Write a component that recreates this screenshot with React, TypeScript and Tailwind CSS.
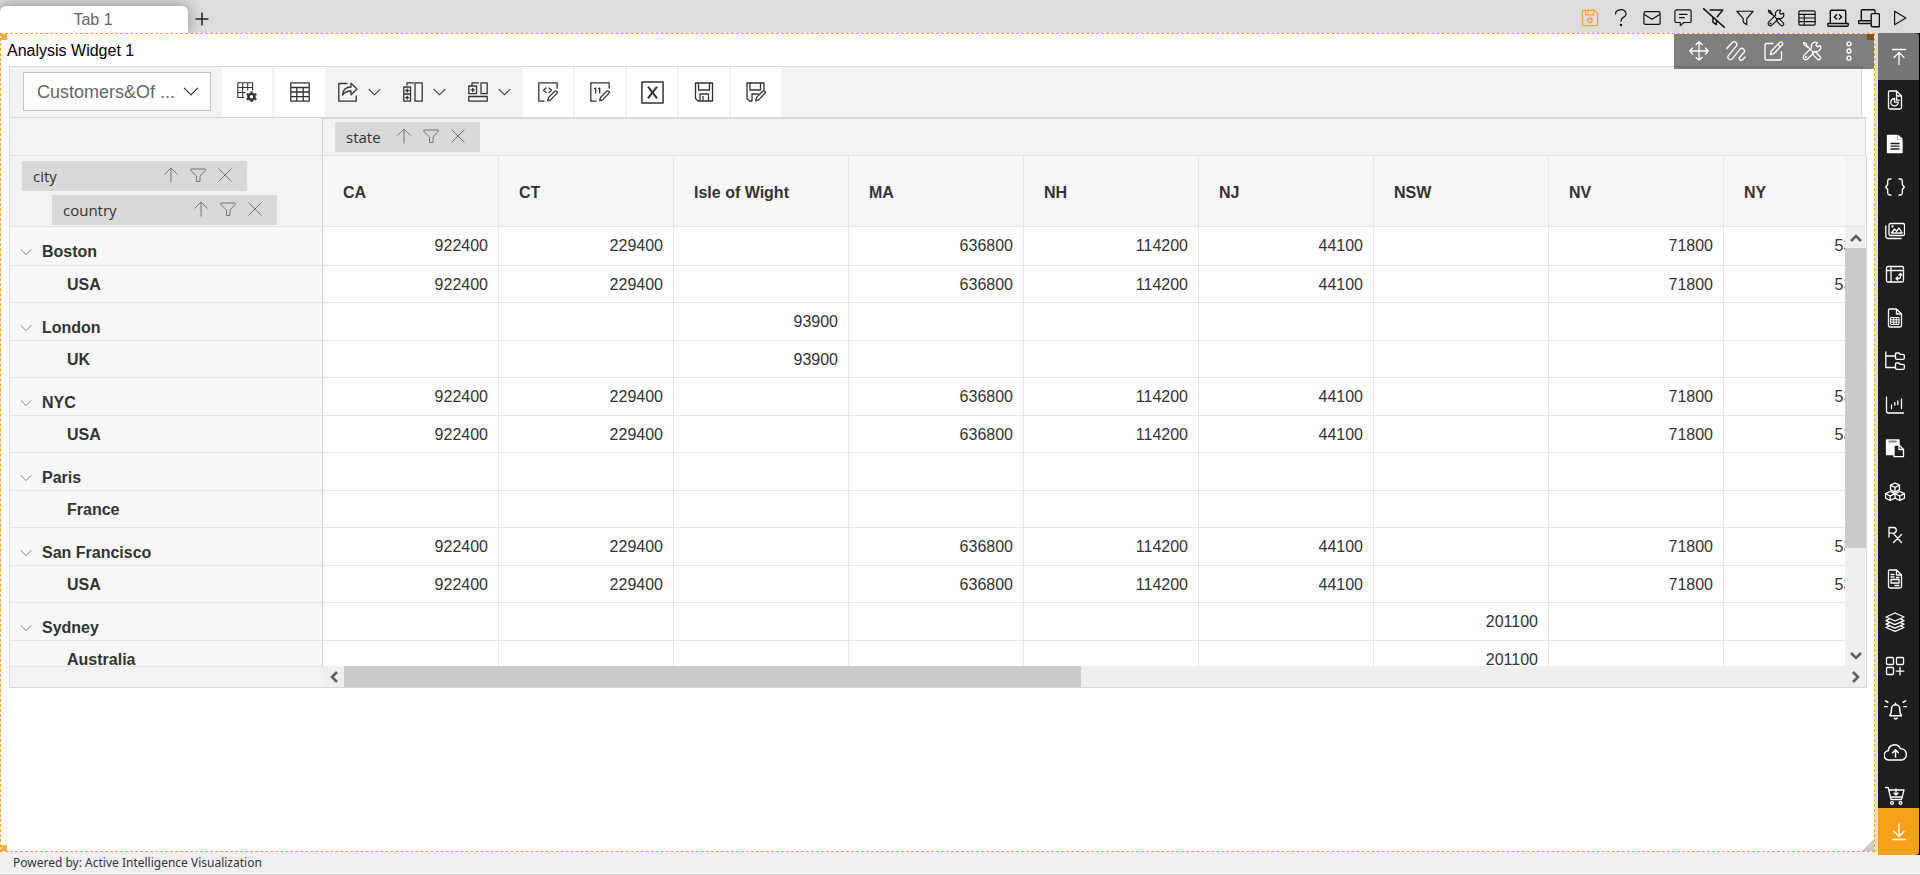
import type { ReactNode } from 'react'

interface IconProps {
  children: ReactNode
  className?: string
}

function Icon({ children, className = 'size-5' }: IconProps) {
  return (
    <svg
      viewBox="0 0 20 20"
      fill="none"
      stroke="currentColor"
      strokeWidth="1.3"
      strokeLinecap="round"
      strokeLinejoin="round"
      className={`${className} shrink-0`}
      aria-hidden="true"
    >
      {children}
    </svg>
  )
}

const toolsIcon = (
  <>
    <path d="M1.5 1.5l2.2.6L6 6l5.5 5.5M1.5 1.5l.6 2.2L5.6 6.2" />
    <path d="M11.5 11l1.5-.5 5 5a1.8 1.8 0 0 1-2.6 2.6l-5-5 .6-1.6" />
    <path d="M18.3 4.6l-2.8 1.2-1.5-1.5 1.2-2.8a4.2 4.2 0 0 0-5.6 5.3L2 14.4A2.5 2.5 0 1 0 5.6 18l7.6-7.6a4.2 4.2 0 0 0 5.1-5.8z" />
    <circle cx="3.9" cy="16.1" r=".5" />
  </>
)

const headerIcons = [
  {
    label: 'Save',
    className: 'text-[#f9a11b]',
    icon: (
      <>
        <path d="M1.5 3a1.5 1.5 0 0 1 1.5-1.5h12L18.5 5v12a1.5 1.5 0 0 1-1.5 1.5H3A1.5 1.5 0 0 1 1.5 17z" />
        <path d="M5 1.5v5h9v-5M8 1.5v2.5" />
        <circle cx="10" cy="12.5" r="2.4" />
      </>
    ),
  },
  {
    label: 'Help',
    icon: (
      <>
        <path d="M4 5.500a5.800 4.500 0 1 1 8.500 3.800C10.600 10.400 10 11.200 10 13.500" />
        <circle cx="10" cy="17.800" r=".7" fill="currentColor" />
      </>
    ),
  },
  {
    label: 'Mail',
    icon: (
      <>
        <rect x="1" y="3" width="18" height="14" rx="1.5" />
        <path d="M1.500 6l8.500 5.500L18.500 6" />
      </>
    ),
  },
  {
    label: 'Comments',
    icon: <path d="M2.500 1h15A1.500 1.500 0 0 1 19 2.500v11a1.500 1.500 0 0 1-1.500 1.500H11l-4 3.500V15H2.500A1.500 1.500 0 0 1 1 13.500v-11A1.500 1.500 0 0 1 2.500 1zM6 6h8.500M6 9.500h5.500" />,
  },
  {
    label: 'Clear filter',
    wide: true,
    icon: <path d="M.5 1.500L19.500 18.500M6.500 2.800h11.500l-5 6M9 9.500v4.200l3.200 2.300v-3.500" />,
  },
  {
    label: 'Filter',
    icon: <path d="M1 2.500h18l-7 8.200V17.500l-4-2.700v-4.100z" />,
  },
  { label: 'Tools', icon: toolsIcon },
  {
    label: 'Data table',
    icon: (
      <>
        <rect x="1" y="2" width="18" height="16" rx="1.200" />
        <path d="M1 6h18M1 10h18M1 14h18M7 6v12" />
      </>
    ),
  },
  {
    label: 'Script',
    wide: true,
    icon: <path d="M3 14.500V4a1 1 0 0 1 1-1h12a1 1 0 0 1 1 1v10.500M.7 15h18.600v1.500a1 1 0 0 1-1 1H1.700a1 1 0 0 1-1-1zM8.700 7L6.700 9l2 2M11.300 7l2 2-2 2" />,
  },
  {
    label: 'Devices',
    wide: true,
    icon: (
      <>
        <path d="M3 12V3.500a1 1 0 0 1 1-1h10.500a1 1 0 0 1 1 1V5M.5 12.500h10.500M.5 12.500v1.500a1 1 0 0 0 1 1H11" />
        <rect x="12" y="6" width="7.500" height="12" rx="1" />
      </>
    ),
  },
  { label: 'Run', icon: <path d="M4 2.500v15L16.500 10z" /> },
]

const widgetIcons = [
  {
    label: 'Move',
    icon: <path d="M10 .8v18.400M.8 10h18.400M7 3.500l3-2.700 3 2.700M7 16.500l3 2.700 3-2.700M3.500 7L.8 10l2.700 3M16.500 7l2.700 3-2.700 3" />,
  },
  {
    label: 'Link',
    icon: <path d="M.8 7.500L6 1.800a2.700 2.700 0 0 1 4.200 3.400L2.600 14.400a2.400 2.400 0 0 0 3.600 3.400L14 8.200a2.600 2.600 0 0 1 4 3.300L13.800 16a1.900 1.900 0 0 0 2.700 2.700l2.700-2.700" />,
  },
  {
    label: 'Edit',
    icon: <path d="M9 2.500H2.500A1.500 1.500 0 0 0 1 4v13.500A1.500 1.500 0 0 0 2.500 19H16a1.500 1.500 0 0 0 1.500-1.500V11M6.500 13.700l.8-3.700L15.700 1.500a1.700 1.700 0 0 1 2.500 0 1.700 1.700 0 0 1 0 2.500L10 12.500zM14 3.500L16.500 6" />,
  },
  { label: 'Settings', icon: toolsIcon },
  {
    label: 'More',
    icon: (
      <>
        <circle cx="10" cy="2.800" r="2" />
        <circle cx="10" cy="10" r="2" />
        <circle cx="10" cy="17.200" r="2" />
      </>
    ),
  },
]

const pageOutline = 'M4.500 1h7L16.500 6v11.500a1.500 1.500 0 0 1-1.500 1.500H5a1.500 1.500 0 0 1-1.500-1.500V2a1 1 0 0 1 1-1zM11.500 1v5h5'

const sidebarIcons = [
  {
    label: 'Report',
    icon: (
      <>
        <path d={pageOutline} />
        <path d="M9.500 8.500a3.700 3.700 0 1 0 3.700 3.700H9.500zM11.500 7.500v2.700h2.700" />
      </>
    ),
  },
  {
    label: 'Document',
    icon: (
      <>
        <path d="M2.500 1.500h9v5h5.500v12H2.500z" fill="currentColor" />
        <path d="M13 1.500L17 5h-4z" fill="currentColor" />
        <path d="M6 9.500h8M6 12.200h8M6 15h8" stroke="#1e1e1e" />
      </>
    ),
  },
  {
    label: 'Variables',
    icon: <path d="M6 2H4.500A2 2 0 0 0 2.700 4v3.500L.7 10l2 2.500V16a2 2 0 0 0 1.800 2H6M14 2h1.500a2 2 0 0 1 1.800 2v3.500l2 2.500-2 2.500V16a2 2 0 0 1-1.800 2H14" />,
  },
  {
    label: 'Images',
    icon: (
      <>
        <rect x="4" y="2.500" width="15.500" height="12" rx="1.500" />
        <path d="M.8 5v10.500A2 2 0 0 0 2.800 17.500H16M6.500 12l3-4 2.200 2.200L14 7l3.200 5z" />
        <circle cx="7.500" cy="5.500" r=".5" />
      </>
    ),
  },
  {
    label: 'Pivot',
    icon: (
      <>
        <rect x="1.500" y="2.500" width="17" height="15.500" rx="1.500" />
        <path d="M1.500 6.500h17M6 2.500V18M11 14.500h2.500a2 2 0 0 0 2-2V10M12.500 13L11 14.500l1.500 1.500M14 11l1.500-1.500L17 11" />
      </>
    ),
  },
  {
    label: 'Data sheet',
    icon: (
      <>
        <path d={pageOutline} />
        <path d="M6 9.500h8v7H6zM6 11.800h8M6 14.200h8M8.700 9.500v7M11.300 9.500v7" strokeWidth="1" />
      </>
    ),
  },
  {
    label: 'Folders',
    icon: <path d="M.8 1v15.500h9M.8 5h9M11 2h3l1 1.300h3a1.300 1.300 0 0 1 1.300 1.300V7A1.300 1.300 0 0 1 18 8.300h-6A1.300 1.300 0 0 1 10.500 7V2.500zM11 12h3l1 1.300h3a1.300 1.300 0 0 1 1.300 1.300V17a1.300 1.300 0 0 1-1.300 1.300h-6A1.300 1.300 0 0 1 10.500 17v-4.500z" />,
  },
  {
    label: 'Charts',
    icon: <path d="M1.500 2v14a2 2 0 0 0 2 2h15M6.500 10v3.500M9.800 7.500v2.700M12.800 6v3.500M16.500 4v9.500" />,
  },
  {
    label: 'Templates',
    icon: (
      <>
        <path d="M1.500 2H14v4.500H9.500v10h-8z" fill="currentColor" />
        <path d="M4.500 3.500H11" stroke="#888" strokeWidth="2" />
        <path d="M9 7h5l4.500 4.500v7.200H9z" fill="#1e1e1e" />
        <path d="M14 7v4.500h4.500" />
      </>
    ),
  },
  {
    label: 'Cubes',
    icon: <path d="M10 1l4.500 2.200v4.600L10 10 5.500 7.800V3.200zM5.500 3.200L10 5.500l4.500-2.300M10 5.500V10M5.200 9.500L10 11.700v4.500L5.200 18.500.5 16.200v-4.500zM.5 11.700L5.200 14 10 11.700M5.200 14v4.500M14.800 9.500l4.700 2.200v4.500l-4.700 2.300L10 16.200v-4.500zM10 11.700l4.800 2.300 4.700-2.300M14.800 14v4.500" />,
  },
  {
    label: 'Formulas',
    icon: <path d="M4 12V2.500h4.500a2.800 2.800 0 0 1 0 5.600H4M8 8.100l8.500 9.400M16.500 9.500l-8 8" />,
  },
  {
    label: 'Forms',
    icon: (
      <>
        <path d={pageOutline} />
        <path d="M6 5.500h3M6 8h3M6 10.500h8v3.500H6zM11.500 8.500h2.500M10 16.500h4" />
      </>
    ),
  },
  {
    label: 'Layers',
    icon: <path d="M10 1l9 4-9 4-9-4zM4 7.200L1 8.700l9 4 9-4-3-1.500M4 10.800l-3 1.400 9 4 9-4-3-1.400M4 14.200L1 15.500l9 3.800 9-3.800-3-1.300" />,
  },
  {
    label: 'Add widget',
    icon: (
      <>
        <rect x="1.500" y="1.500" width="7" height="7" rx="1" />
        <rect x="11.500" y="1.500" width="7" height="7" rx="1" />
        <rect x="1.500" y="11.500" width="7" height="7" rx="1" />
        <path d="M15 11.500v7.500M11.300 15.200h7.500" />
      </>
    ),
  },
  {
    label: 'Alerts',
    wide: true,
    icon: <path d="M5 15.500c1.300-1.500 1.500-3 1.500-6a3.600 3.600 0 0 1 7.200 0c0 3 .2 4.500 1.500 6zM9 17.500a1.300 1.300 0 0 0 2.300 0M10 4.500v1M.3 7.500h2.500M1.300 2.500l2 1.200M17.200 7.500h2.500M18.700 2.500l-2 1.200" />,
  },
  {
    label: 'Upload',
    wide: true,
    icon: <path d="M4.500 16.500a4 4 0 0 1-.8-8 5.500 5.500 0 0 1 10.600-1.700 4.900 4.900 0 0 1 1.200 9.700zM10 14V8M7.500 10.200L10 7.700l2.500 2.500" />,
  },
  {
    label: 'Cart',
    icon: (
      <>
        <path d="M.5 1.500h2.700L6 13.500h10.500L19 4H4M5.500 11h12M11 3v5.500M9 7l2 2 2-2" />
        <circle cx="7" cy="17" r="1.400" />
        <circle cx="15.500" cy="17" r="1.400" />
      </>
    ),
  },
]

const pencilIcon = <path d="M9.800 18.800l.6-3.200 6.200-6.300a1.500 1.500 0 0 1 2.200 0 1.500 1.500 0 0 1 0 2.100l-6.200 6.500z" />

const gridButtons = [
  {
    label: 'Field list',
    icon: (
      <>
        <path d="M7 15.500H.8V.8h14.800V8M.8 5.500h14.800M.8 10.500H8M5.700.8v14.700M10.700.8V8" strokeWidth="1.100" />
        <circle cx="14.500" cy="14.800" r="3" strokeWidth="2.600" />
        <path d="M14.500 9.300v1.500M14.500 18.800v1.200M9.700 12l1.400.8M18 16.800l1.400.8M9.700 17.600l1.400-.8M18 12.800l1.400-.8" strokeWidth="2.200" strokeLinecap="butt" />
      </>
    ),
  },
  {
    label: 'Grid view',
    icon: <path d="M.8.8h18.400v18.400H.8zM.8 5.500h18.400M.8 10h18.400M.8 14.600h18.400M6.800 5.500v13.700M13.200 5.500v13.700" />,
  },
]

const menuButtons = [
  {
    label: 'Export',
    icon: <path d="M9 1.500H.8v17.700h17.400V14M4.500 13c.5-5 3.500-8 8.500-8V1.200L19 7l-6 5.700V9c-3.500 0-6 1-8.500 4z" />,
  },
  {
    label: 'Subtotals',
    icon: <path d="M4 3V.8h6.500M.8 5h6.700v14.200H.8zM.8 12h6.700M4.200 7v3M2.700 8.500h3M4.200 14.200v3M2.700 15.700h3M12 .8h7.200v18.400H12z" />,
  },
  {
    label: 'Grand totals',
    icon: <path d="M4 3V.8h6.500M.8 4h7.700v7.700H.8zM4.700 6.300v3.200M3.100 7.900h3.200M13 .8h6.200v10.900H13zM.8 14.500h18.400v4.700H.8z" />,
  },
]

const formatButtons = [
  {
    label: 'Conditional formatting',
    icon: (
      <>
        <path d="M6 19.200H.8V.8h18.400V6M8 6L5.500 8.300 8 10.500M11 6l2.500 2.300L11 10.500" />
        {pencilIcon}
      </>
    ),
  },
  {
    label: 'Number formatting',
    icon: (
      <>
        <path d="M6 19.200H.8V.8h18.400V6M4.500 6.500l1.200-.5v5M8.500 6.500L9.700 6v5" />
        {pencilIcon}
      </>
    ),
  },
  {
    label: 'Export to Excel',
    large: true,
    icon: (
      <>
        <path d="M.8.8h18.400v18.400H.8z" />
        <path d="M6.500 5.500l7 9M13.500 5.500l-7 9" strokeWidth="1.800" />
      </>
    ),
  },
  {
    label: 'Save layout',
    icon: <path d="M1.500 1h17v18H4l-2.500-2.500zM4.500 1v7h11V1M6 19v-7h8.500v7M9 14.500V19" />,
  },
  {
    label: 'Save layout as',
    icon: (
      <>
        <path d="M6 19H3.500L1 16.500V1h17v7M4 1v7h10.500V1M6 19v-7h6" />
        {pencilIcon}
      </>
    ),
  },
]

const states = ['CA', 'CT', 'Isle of Wight', 'MA', 'NH', 'NJ', 'NSW', 'NV', 'NY']

const usSales = ['922400', '229400', '', '636800', '114200', '44100', '', '71800', '534700']
const ukSales = ['', '', '93900', '', '', '', '', '', '']
const nswSales = ['', '', '', '', '', '', '201100', '', '']
const noSales = ['', '', '', '', '', '', '', '', '']

const cities = [
  { city: 'Boston', country: 'USA', values: usSales },
  { city: 'London', country: 'UK', values: ukSales },
  { city: 'NYC', country: 'USA', values: usSales },
  { city: 'Paris', country: 'France', values: noSales },
  { city: 'San Francisco', country: 'USA', values: usSales },
  { city: 'Sydney', country: 'Australia', values: nswSales },
]

function Chevron({ className }: { className: string }) {
  return (
    <svg viewBox="0 0 14 8" fill="none" stroke="currentColor" strokeWidth="1.100" className={`${className} shrink-0`} aria-hidden="true">
      <path d="M.8.8L7 7l6.200-6.200" />
    </svg>
  )
}

function FieldChip({ name, className }: { name: string; className: string }) {
  return (
    <div className={`flex h-[30px] items-center bg-[#d9d9d9] pr-3.5 pl-[11px] font-['Open_Sans','Noto_Sans',sans-serif] text-[15px] text-[#333] ${className}`}>
      <span className="flex-1 leading-5">{name}</span>
      <div className="flex gap-[11px] pb-0.5 text-[#777]">
        <button aria-label={`Sort ${name}`}>
          <svg viewBox="0 0 16 16" className="size-4" fill="none" stroke="currentColor">
            <path d="M8 15.500V1M1.500 7.500L8 1l6.500 6.500" />
          </svg>
        </button>
        <button aria-label={`Filter ${name}`}>
          <svg viewBox="0 0 16 16" className="size-4" fill="none" stroke="currentColor">
            <path d="M.8 2h14.400v1.500L10 9v5.500H6.500V9L.8 3.500z" />
          </svg>
        </button>
        <button aria-label={`Remove ${name}`}>
          <svg viewBox="0 0 16 16" className="size-4" fill="none" stroke="currentColor">
            <path d="M1.500 1.500l13 13M14.500 1.500l-13 13" />
          </svg>
        </button>
      </div>
    </div>
  )
}

function ScrollArrow({ label, d }: { label: string; d: string }) {
  return (
    <button aria-label={label} className="flex size-[21px] shrink-0 items-center justify-center text-[#606060]">
      <svg viewBox="0 0 12 12" className="size-3" fill="none" stroke="currentColor" strokeWidth="2.600">
        <path d={d} />
      </svg>
    </button>
  )
}

function Header() {
  return (
    <header className="flex h-[33px] shrink-0 items-end justify-between overflow-hidden bg-[#ddd]">
      <div className="flex items-end">
        <button className="h-[27px] w-[188px] rounded-t-md bg-white pr-0.5 text-base leading-[27px] text-[#666] shadow-[0_0_16px_rgba(0,0,0,0.4)]">
          Tab 1
        </button>
        <button aria-label="Add tab" className="flex size-7 items-center justify-center">
          <svg viewBox="0 0 14 14" className="size-3.5" fill="none" stroke="#222" strokeWidth="1.500">
            <path d="M7 .5v13M.5 7h13" />
          </svg>
        </button>
      </div>
      <div className="flex pr-[5px]">
        {headerIcons.map(({ label, icon, className, wide }) => (
          <button key={label} aria-label={label} className={`flex h-[31px] w-[31px] items-center justify-center ${className ?? 'text-[#111]'}`}>
            <Icon className={wide ? 'size-[22px]' : 'size-[18px]'}>{icon}</Icon>
          </button>
        ))}
      </div>
    </header>
  )
}

function PivotToolbar() {
  return (
    <div className="mr-[5px] flex h-[51px] border border-b-0 border-[#d9d9d9] bg-[#f3f3f3] text-[#333]">
      <div className="relative mt-[5px] mr-[11px] ml-[13px] h-[39px] w-[188px]">
        <select
          aria-label="Data set"
          defaultValue="customers"
          className="size-full appearance-none border border-[#c0c4d6] bg-white pl-[13px] text-lg text-[#666]"
        >
          <option value="customers">Customers&amp;Of ...</option>
        </select>
        <Chevron className="pointer-events-none absolute top-[15px] right-3 h-[9px] w-4" />
      </div>
      <div className="flex gap-[3px]">
        {gridButtons.map(({ label, icon }) => (
          <button key={label} aria-label={label} className="flex w-[50px] items-center justify-center bg-white">
            <Icon>{icon}</Icon>
          </button>
        ))}
      </div>
      <div className="flex">
        {menuButtons.map(({ label, icon }) => (
          <button key={label} aria-label={label} className="flex w-[65px] items-center gap-2.5 pl-[13px]">
            <Icon>{icon}</Icon>
            <Chevron className="h-2 w-[13px]" />
          </button>
        ))}
      </div>
      <div className="ml-[3px] flex gap-0.5">
        {formatButtons.map(({ label, icon, large }) => (
          <button key={label} aria-label={label} className="flex w-[50px] items-center justify-center bg-white">
            <Icon className={large ? 'size-[23px]' : 'size-5'}>{icon}</Icon>
          </button>
        ))}
      </div>
    </div>
  )
}

function PivotTable() {
  return (
    <table className="w-[1889px] table-fixed border-separate border-spacing-0 text-base leading-5 text-[#333]">
      <colgroup>
        <col className="w-[313px]" />
        {states.map((state) => (
          <col key={state} className="w-[175px] nth-2:w-[176px]" />
        ))}
      </colgroup>
      <thead>
        <tr>
          <th className="h-[71px] border-r border-b border-[#e3e3e3] border-r-[#d4d4d4] bg-[#f3f3f3] px-0 pt-[3px] pb-0 text-left font-normal">
            <FieldChip name="city" className="ml-3 w-[225px]" />
            <FieldChip name="country" className="mt-1 ml-[42px] w-[225px]" />
          </th>
          {states.map((state) => (
            <th key={state} scope="col" className="border-r border-b border-[#e6e6e6] bg-[#f8f8f8] px-5 pt-1 text-left font-bold">
              {state}
            </th>
          ))}
        </tr>
      </thead>
      {cities.map(({ city, country, values }) => (
        <tbody key={city} className="group">
          <tr>
            <th scope="row" className="h-[38px] border-r border-b border-[#e6e6e6] border-r-[#d4d4d4] bg-[#f8f8f8] p-0 text-left group-first-of-type:h-[39px]">
              <div className="flex items-center gap-2.5 pt-3 pl-2.5">
                <button aria-label={`Collapse ${city}`} className="text-[#777]">
                  <Chevron className="h-2 w-3" />
                </button>
                {city}
              </div>
            </th>
            {values.map((value, i) => (
              <td key={states[i]} className="border-r border-b border-[#e6e6e6] bg-white px-2.5 py-0 text-right">
                {value}
              </td>
            ))}
          </tr>
          <tr>
            <th scope="row" className="h-[37px] border-r border-b border-[#e6e6e6] border-r-[#d4d4d4] bg-[#f8f8f8] pt-0.5 pr-0 pb-0 pl-[57px] text-left">
              {country}
            </th>
            {values.map((value, i) => (
              <td key={states[i]} className="border-r border-b border-[#e6e6e6] bg-white px-2.5 pt-0.5 pb-0 text-right">
                {value}
              </td>
            ))}
          </tr>
        </tbody>
      ))}
    </table>
  )
}

function PivotView() {
  return (
    <div className="mr-[7px] ml-[9px]">
      <PivotToolbar />
      <div className="mr-px flex h-[39px] border border-[#d9d9d9] border-b-[#e3e3e3] bg-[#f3f3f3]">
        <div className="w-[313px] shrink-0 border-r border-[#d4d4d4]" />
        <div className="flex-1 border-t border-[#d9d9d9] pt-[3px] pl-3">
          <FieldChip name="state" className="w-[145px]" />
        </div>
      </div>
      <div className="border border-t-0 border-[#d9d9d9]">
        <div className="flex h-[510px]">
          <div className="min-w-0 flex-1 overflow-hidden">
            <PivotTable />
          </div>
          <div className="flex w-[21px] shrink-0 flex-col bg-[#efefef]">
            <div className="h-[71px] shrink-0 border-b border-[#e3e3e3] bg-[#f3f3f3]" />
            <ScrollArrow label="Scroll up" d="M1 9l5-5 5 5" />
            <div className="h-[300px] bg-[#cbcbcb]" />
            <div className="flex-1" />
            <ScrollArrow label="Scroll down" d="M1 3l5 5 5-5" />
          </div>
        </div>
        <div className="flex h-[21px] bg-[#efefef]">
          <div className="w-[313px] shrink-0 border-t border-[#e3e3e3] bg-[#f3f3f3]" />
          <ScrollArrow label="Scroll left" d="M9 1L4 6l5 5" />
          <div className="flex-1">
            <div className="h-full w-[737px] bg-[#cbcbcb]" />
          </div>
          <ScrollArrow label="Scroll right" d="M3 1l5 5-5 5" />
        </div>
      </div>
    </div>
  )
}

function Widget() {
  return (
    <main className="relative min-w-0 flex-1 overflow-hidden border border-dashed border-[#f9a11b] bg-white">
      <h1 className="-ml-px h-8 pt-1.5 pl-[7px] text-base leading-[22px] text-black">Analysis Widget 1</h1>
      <div className="-ml-px">
        <PivotView />
      </div>
      <span className="absolute -top-px -left-px size-[7px] bg-[#ffab3d]" />
      <span className="absolute -top-px right-0 size-[7px] bg-[#ffab3d]" />
      <span className="absolute -bottom-px -left-px size-[7px] bg-[#ffab3d]" />
      <svg viewBox="0 0 12 12" className="absolute right-0 bottom-0 size-3" aria-hidden="true">
        <path d="M12 0v12H0z" fill="#ccc" />
      </svg>
      <div className="absolute top-0 right-0 flex h-[35px] w-[200px] justify-around bg-black/50 px-1.5 text-white">
        {widgetIcons.map(({ label, icon }) => (
          <button key={label} aria-label={label} className="pb-0.5">
            <Icon>{icon}</Icon>
          </button>
        ))}
      </div>
    </main>
  )
}

function Sidebar() {
  return (
    <nav className="-mb-[3px] flex w-[42px] shrink-0 flex-col border-r border-black bg-[#1e1e1e] text-white">
      <button aria-label="Scroll to top" className="flex h-[47px] shrink-0 items-center justify-center rounded-tr bg-[#757575]">
        <Icon>
          <path d="M3.500 2.500h13M10 17.500V6M5 10.500L10 5.500l5 5" />
        </Icon>
      </button>
      <div className="flex min-h-0 flex-1 flex-col justify-between overflow-hidden pt-2.5 pr-[7px] pb-0.5">
        {sidebarIcons.map(({ label, icon, wide }) => (
          <button key={label} aria-label={label} className="flex h-5 items-center justify-center">
            <Icon className={wide ? 'size-[23px]' : 'size-5'}>{icon}</Icon>
          </button>
        ))}
      </div>
      <button aria-label="Scroll to bottom" className="flex h-[47px] shrink-0 items-center justify-center rounded-br bg-[#f9a11b]">
        <Icon>
          <path d="M3.500 17.500h13M10 2v12M5 9.500l5 5 5-5" />
        </Icon>
      </button>
    </nav>
  )
}

export default function App() {
  return (
    <div className="flex h-screen flex-col overflow-hidden bg-white font-['Liberation_Sans',Arial,sans-serif]">
      <Header />
      <div className="z-10 flex min-h-0 flex-1">
        <Widget />
        <div className="w-[3px] shrink-0 bg-[#ddd]" />
        <Sidebar />
      </div>
      <footer className="h-5 shrink-0 bg-[#f0f0f0] pl-[13px] font-['Noto_Sans',sans-serif] text-xs leading-[22px] text-[#334]">
        Powered by: Active Intelligence Visualization
      </footer>
      <div className="h-[3px] shrink-0 border-b border-[#d0d0d0] bg-[#f8f8f8]" />
    </div>
  )
}
